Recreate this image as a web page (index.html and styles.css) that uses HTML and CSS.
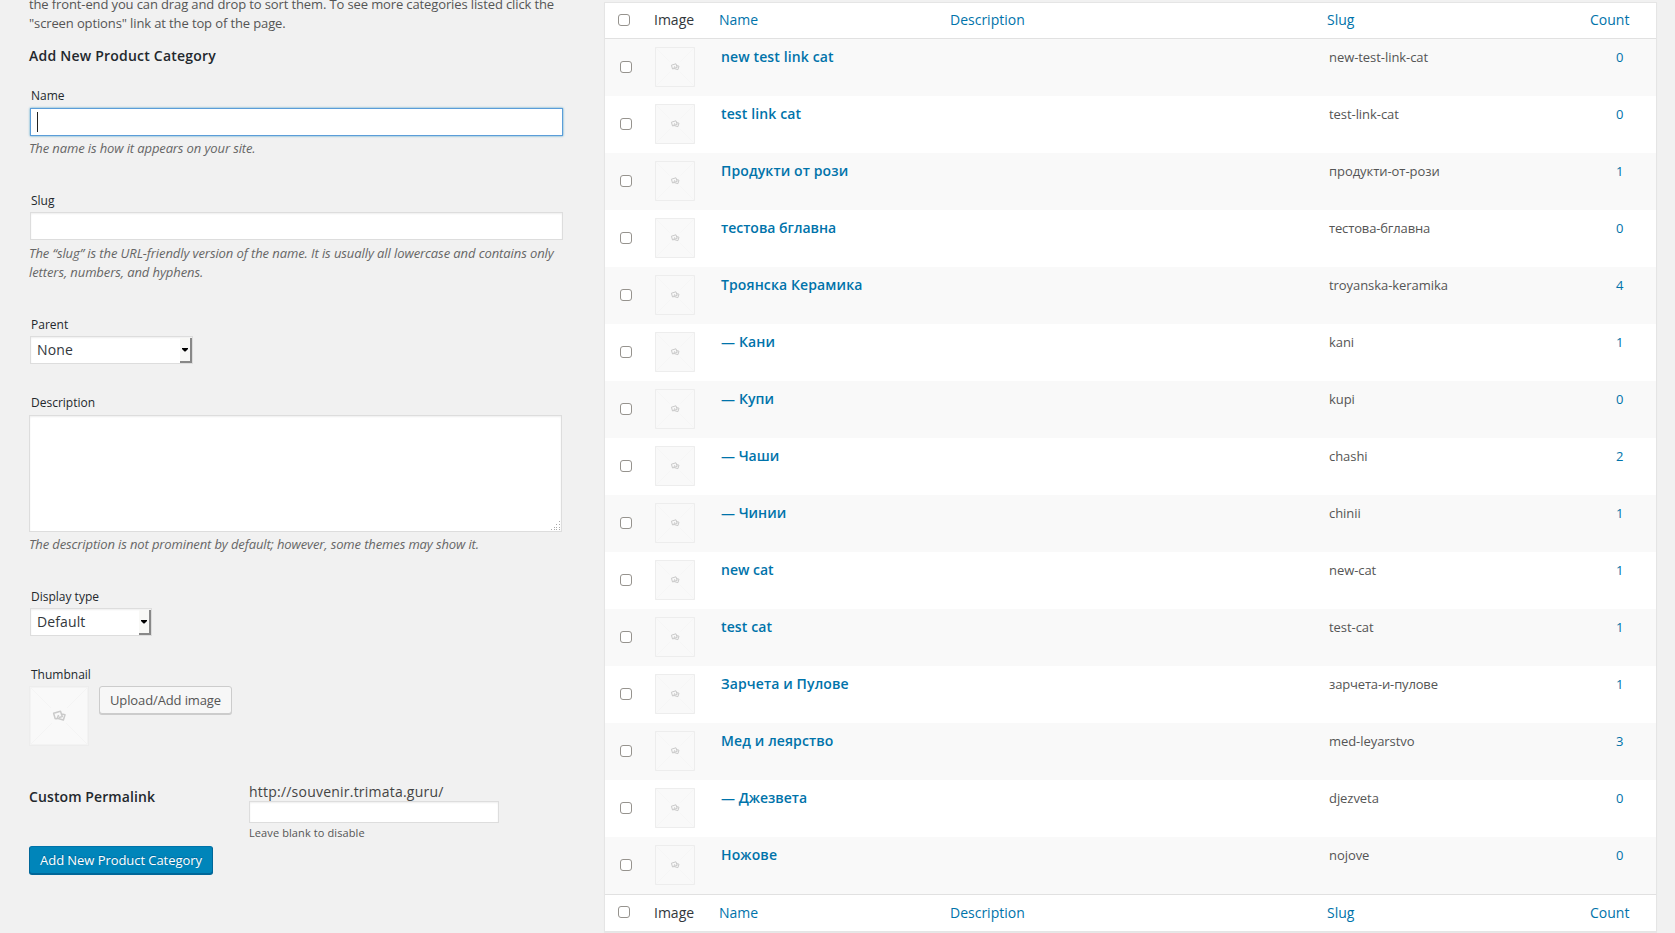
FILE: index.html
```html
<!DOCTYPE html>
<html lang="en">
<head>
<meta charset="utf-8">
<title>Product Categories</title>
<link rel="stylesheet" href="styles.css">
</head>
<body>
<svg width="0" height="0" class="defs">
  <symbol id="ph" viewBox="0 0 60 60">
    <rect x=".75" y=".75" width="58.5" height="58.5" fill="#f9f9f9" stroke="#ededed" stroke-width="1.5"/>
    <path d="M1 1L59 59M59 1L1 59" stroke="#f4f4f4" stroke-width="1" fill="none"/>
    <rect x="21" y="22" width="18" height="15" fill="#f9f9f9"/>
    <path d="M26.300 33L24.600 27.300L31.500 25.200L33.300 30.600L30 31.500M31.600 27.600L36 28.800L34.400 34L28.300 32.200L29.600 28.900" stroke="#cacaca" stroke-width="1.500" fill="none" stroke-linejoin="round"/>
    <path d="M26.300 33L29 32.200" stroke="#cacaca" stroke-width="1.500"/>
  </symbol>
</svg>
<div class="page">
  <main class="form">
    <p class="intro">the front-end you can drag and drop to sort them. To see more categories listed click the<br>"screen options" link at the top of the page.</p>
    <h3>Add New Product Category</h3>
    <div class="field f-name">
      <label>Name</label>
      <div class="input focus"><i class="caret"></i></div>
      <p class="help">The name is how it appears on your site.</p>
    </div>
    <div class="field f-slug">
      <label>Slug</label>
      <div class="input"></div>
      <p class="help">The “slug” is the URL-friendly version of the name. It is usually all lowercase and contains only<br>letters, numbers, and hyphens.</p>
    </div>
    <div class="field f-parent">
      <label>Parent</label>
      <div class="select s1"><span>None</span><b><svg width="6" height="4" viewBox="0 0 6 4"><path d="M0 0h6v1L3.500 3.500h-1L0 1z"/></svg></b></div>
    </div>
    <div class="field f-desc">
      <label>Description</label>
      <div class="area"><svg width="10" height="10" viewBox="0 0 10 10" fill="#aaa"><path d="M8 0h1v1h-1zM8 3h1v1h-1zM5 3h1v1h-1zM8 6h1v1h-1zM5 6h1v1h-1zM3 6h1v1h-1zM8 8h1v1h-1zM5 8h1v1h-1zM3 8h1v1h-1zM0 8h1v1h-1z"/></svg></div>
      <p class="help">The description is not prominent by default; however, some themes may show it.</p>
    </div>
    <div class="field f-type">
      <label>Display type</label>
      <div class="select s2"><span>Default</span><b><svg width="6" height="4" viewBox="0 0 6 4"><path d="M0 0h6v1L3.500 3.500h-1L0 1z"/></svg></b></div>
    </div>
    <div class="field f-thumb">
      <label>Thumbnail</label>
      <div class="thumb"><svg width="60" height="60"><use href="#ph"/></svg><button class="btn">Upload/Add image</button></div>
    </div>
    <div class="perma">
      <strong>Custom Permalink</strong>
      <div class="pbox"><span class="url">http://souvenir.trimata.guru/</span><div class="input small"></div><small>Leave blank to disable</small></div>
    </div>
    <button class="btn primary">Add New Product Category</button>
  </main>
  <section class="table">
    <div class="row head"><i class="cb"></i><span>Image</span><a>Name</a><a>Description</a><a>Slug</a><a class="num">Count</a></div>
    <div class="row"><i class="cb"></i><svg class="ph"><use href="#ph"/></svg><a class="nm">new test link cat</a><span></span><span class="sl">new-test-link-cat</span><a class="ct">0</a></div>
    <div class="row"><i class="cb"></i><svg class="ph"><use href="#ph"/></svg><a class="nm">test link cat</a><span></span><span class="sl">test-link-cat</span><a class="ct">0</a></div>
    <div class="row"><i class="cb"></i><svg class="ph"><use href="#ph"/></svg><a class="nm">Продукти от рози</a><span></span><span class="sl">продукти-от-рози</span><a class="ct">1</a></div>
    <div class="row"><i class="cb"></i><svg class="ph"><use href="#ph"/></svg><a class="nm tight">тестова бглавна</a><span></span><span class="sl narrow">тестова-бглавна</span><a class="ct">0</a></div>
    <div class="row"><i class="cb"></i><svg class="ph"><use href="#ph"/></svg><a class="nm">Троянска Керамика</a><span></span><span class="sl">troyanska-keramika</span><a class="ct">4</a></div>
    <div class="row"><i class="cb"></i><svg class="ph"><use href="#ph"/></svg><a class="nm">— Кани</a><span></span><span class="sl">kani</span><a class="ct">1</a></div>
    <div class="row"><i class="cb"></i><svg class="ph"><use href="#ph"/></svg><a class="nm">— Купи</a><span></span><span class="sl">kupi</span><a class="ct">0</a></div>
    <div class="row"><i class="cb"></i><svg class="ph"><use href="#ph"/></svg><a class="nm tight">— Чаши</a><span></span><span class="sl">chashi</span><a class="ct">2</a></div>
    <div class="row"><i class="cb"></i><svg class="ph"><use href="#ph"/></svg><a class="nm tight">— Чинии</a><span></span><span class="sl">chinii</span><a class="ct">1</a></div>
    <div class="row"><i class="cb"></i><svg class="ph"><use href="#ph"/></svg><a class="nm tight">new cat</a><span></span><span class="sl">new-cat</span><a class="ct">1</a></div>
    <div class="row"><i class="cb"></i><svg class="ph"><use href="#ph"/></svg><a class="nm">test cat</a><span></span><span class="sl">test-cat</span><a class="ct">1</a></div>
    <div class="row"><i class="cb"></i><svg class="ph"><use href="#ph"/></svg><a class="nm">Зарчета и Пулове</a><span></span><span class="sl narrow">зарчета-и-пулове</span><a class="ct">1</a></div>
    <div class="row"><i class="cb"></i><svg class="ph"><use href="#ph"/></svg><a class="nm">Мед и леярство</a><span></span><span class="sl">med-leyarstvo</span><a class="ct">3</a></div>
    <div class="row"><i class="cb"></i><svg class="ph"><use href="#ph"/></svg><a class="nm tight">— Джезвета</a><span></span><span class="sl">djezveta</span><a class="ct">0</a></div>
    <div class="row"><i class="cb"></i><svg class="ph"><use href="#ph"/></svg><a class="nm">Ножове</a><span></span><span class="sl">nojove</span><a class="ct">0</a></div>
    <div class="row head foot"><i class="cb"></i><span>Image</span><a>Name</a><a>Description</a><a>Slug</a><a class="num">Count</a></div>
  </section>
</div>
</body>
</html>
```
FILE: styles.css
```css
* { box-sizing: border-box; }
html, body { margin: 0; height: 933px; overflow: hidden; }
body { background: #f1f1f1; color: #444; font: 13px/19px "Open Sans", sans-serif; }
.defs { display: block; height: 0; }
.page { display: flex; height: 933px; overflow: hidden; }
p, h3 { margin: 0; }

/* form column */
.form { width: 604px; padding-left: 29px; flex: none; }
.intro { margin-top: -5px; color: #555; white-space: nowrap; letter-spacing: -.12px; }
h3 { margin-top: 13px; font-size: 14px; line-height: 20px; font-weight: 600; color: #23282d; letter-spacing: .22px; }
.field { display: flex; flex-direction: column; align-items: flex-start; }
label { font-size: 12px; line-height: 18px; color: #23282d; padding-left: 2px; }
.help { font-style: italic; color: #666; white-space: nowrap; margin-top: 3px; letter-spacing: -.12px; }
.input { width: 533px; height: 28px; margin: 3px 0 0 1px; border: 1px solid #ddd; background: #fff; box-shadow: inset 0 1px 2px rgba(0,0,0,.07); }
.focus { border-color: #5b9dd9; box-shadow: 0 0 2px rgba(30,140,190,.8); padding: 3px 0 0 6px; }
.caret { display: block; width: 1px; height: 20px; background: #222; }
.f-name { margin-top: 21px; }
.f-slug { margin-top: 34px; }
.f-slug .input { margin-top: 2px; }
.f-slug .help { margin-top: 4px; letter-spacing: -.09px; }
.f-parent { margin-top: 34px; }
.f-desc { margin-top: 30px; }
.f-type { margin-top: 34px; }
.f-thumb { margin-top: 30px; }
.select { display: flex; justify-content: space-between; height: 28px; margin: 2px 0 0 1px; border: 1px solid #ddd; background: #fff; box-shadow: inset 0 1px 2px rgba(0,0,0,.07); font-size: 14px; line-height: 26px; color: #32373c; padding-left: 6px; letter-spacing: .12px; }
.s1 { width: 163px; }
.s2 { width: 122px; }
.select b { width: 12px; height: 25px; margin-top: 1px; background: #f8f8f6; border: solid #888; border-width: 0 2px 2px 0; display: flex; align-items: center; justify-content: center; }
.select b svg { display: block; }
.area { width: 533px; height: 117px; margin-top: 3px; border: 1px solid #ddd; background: #fff; box-shadow: inset 0 1px 2px rgba(0,0,0,.07); display: flex; align-items: flex-end; justify-content: flex-end; }
.area svg { display: block; }
.thumb { display: flex; gap: 10px; margin-top: 2px; align-items: flex-start; height: 60px; }
.thumb svg { display: block; }
.btn { font: 13px/26px "Open Sans", sans-serif; letter-spacing: -.12px; height: 28px; width: 133px; padding: 0; border: 1px solid #ccc; border-radius: 3px; background: #f7f7f7; color: #555; box-shadow: 0 1px 0 #ccc; white-space: nowrap; }
.primary { display: block; width: 184px; letter-spacing: -.06px; color: #fff; background: #0085ba; border-color: #0073aa #006799 #006799; box-shadow: 0 1px 0 #006799; text-shadow: 0 -1px 1px #006799; }
.perma { display: flex; height: 64px; margin-top: 36px; font-size: 14px; line-height: 20px; }
.perma strong { width: 220px; font-weight: 600; color: #23282d; padding-top: 5px; letter-spacing: .1px; }
.pbox { display: flex; flex-direction: column; align-items: flex-start; }
.url { letter-spacing: .22px; }
.small { width: 250px; height: 22px; margin: -1px 0 0; }
small { font-size: 11px; line-height: 18px; margin-top: 1px; color: #555; letter-spacing: .1px; }

/* category table */
.table { width: 1053px; height: 930px; margin-top: 2px; border: 1px solid #e5e5e5; background: #fff; flex: none; box-shadow: 0 1px 1px rgba(0,0,0,.04); }
.row { display: grid; grid-template-columns: 49px 65px 231px 377px 218px 85px; height: 57px; align-items: start; color: #555; white-space: nowrap; }
.row:nth-child(even) { background: #f9f9f9; }
.row a { color: #0073aa; }
.row.head { height: 36px; border-bottom: 1px solid #e1e1e1; font-size: 14px; line-height: 20px; padding-top: 7px; color: #32373c; background: #fff; }
.row.foot { border: 0; border-top: 1px solid #e1e1e1; height: 37px; padding-top: 8px; }
.cb { display: block; width: 12px; height: 12px; margin: 22px 0 0 15px; border: 1px solid #96938e; border-radius: 3px; background: #fff; }
.head .cb { margin: 4px 0 0 13px; }
.foot .cb { margin-top: 3px; }
.num { padding-left: 45px; }
.ph { display: block; width: 40px; height: 40px; margin: 8px 0 0 1px; }
.row .nm { font-size: 14px; font-weight: 600; line-height: 20px; padding: 8px 0 0 2px; letter-spacing: .12px; }
.row .tight { letter-spacing: 0; }
.sl { padding: 9px 0 0 2px; letter-spacing: -.06px; }
.narrow { letter-spacing: -.15px; }
.ct { padding: 9px 0 0 71px; }
```
